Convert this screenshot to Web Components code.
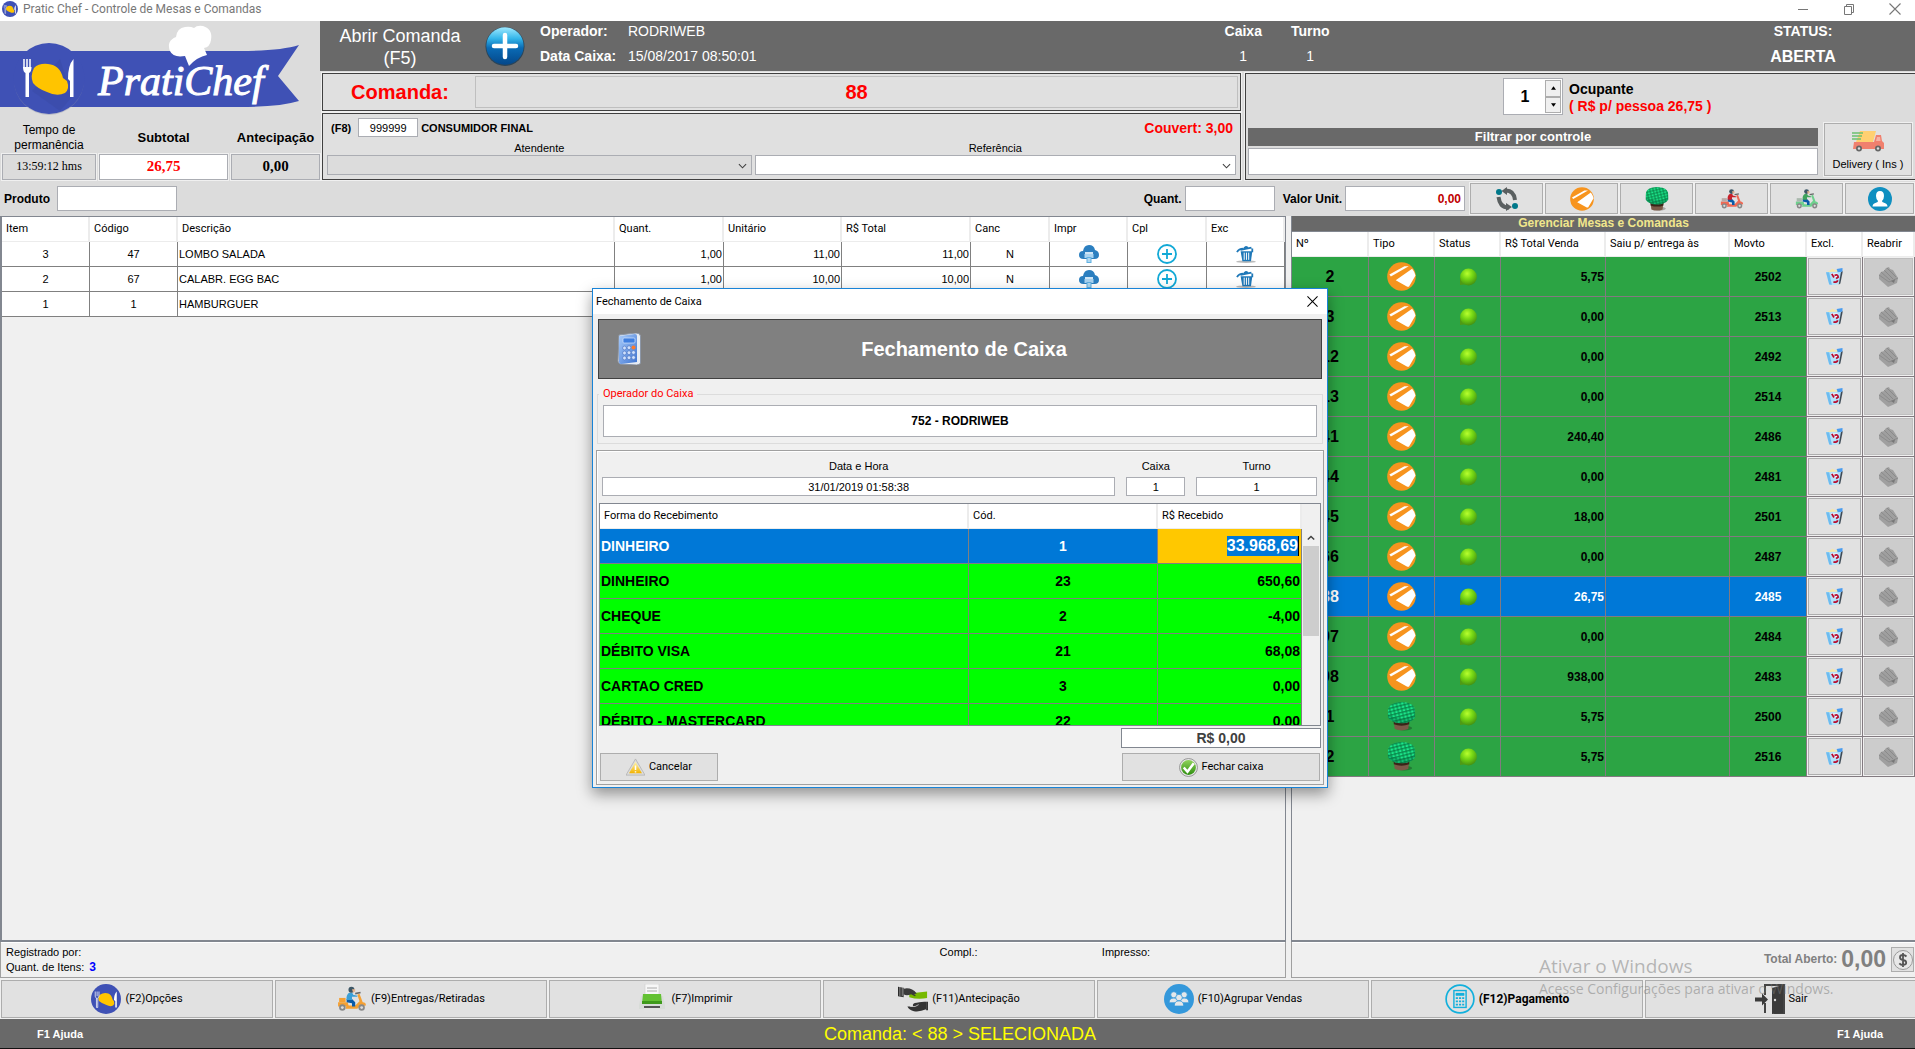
<!DOCTYPE html>
<html lang="pt-BR">
<head>
<meta charset="utf-8">
<title>Pratic Chef - Controle de Mesas e Comandas</title>
<style>
  html, body { margin: 0; height: 100%; overflow: hidden; }
  body { font: 11px/14px "Liberation Sans", Arial, sans-serif; color: #000; background: #f0f0f0; }
</style>
</head>
<body>
<pc-app></pc-app>
<script>
const BASE = `
  *, *::before, *::after { box-sizing: border-box; }
  :host { display: block; box-sizing: border-box; min-width: 0; }
  :host([hidden]) { display: none; }
  input, select, button { font: inherit; color: inherit; margin: 0; border-radius: 0; outline: none; }
  input, select { border: 1px solid #abadb3; background: #fff; padding: 0 4px; min-width: 0; }
`;

class PcElement extends HTMLElement {
  static css = '';
  static html = '';
  constructor() {
    super();
    this.attachShadow({ mode: 'open' });
  }
  attr(name) { return this.getAttribute(name) || ''; }
  render() { return this.constructor.html; }
  connectedCallback() {
    const t = document.createElement('template');
    t.innerHTML = `<style>${BASE}${this.constructor.css}</style>${this.render()}`;
    this.shadowRoot.replaceChildren(t.content.cloneNode(true));
  }
}

/* ---------- icons ---------- */
const SCOOTER = (shirt, bike, box) => `<svg viewBox="0 0 28 24">
  <path d="M1 15h9l1 4H1z" fill="${bike}"/><path d="M9 18h8l4-4-2-6 2-1 3 8c2 0 3 1 3 3l-6 1-2 2H8z" fill="${bike}"/>
  <path d="M17 7l5-1" stroke="#666" stroke-width="1.5"/><rect x="2" y="11" width="6" height="4" fill="${box}"/>
  <circle cx="5" cy="20" r="3" fill="#888"/><circle cx="5" cy="20" r="1.3" fill="#ddd"/>
  <circle cx="23" cy="20" r="3" fill="#888"/><circle cx="23" cy="20" r="1.3" fill="#ddd"/>
  <path d="M9 12h5l3 3v4h-3v-3l-5-1z" fill="#0a5aa8"/>
  <path d="M9 13c-.5-4 1-7 4-7 1 0 2 1 2 2l4 1v1l-5 0 0 3z" fill="${shirt}"/>
  <circle cx="13.500" cy="3.300" r="2.800" fill="#3d5766"/><path d="M14 3h3v2l-2 1z" fill="#e9b48c"/></svg>`;
const TABLE_STOOL = `<svg viewBox="0 0 28 30"><defs>
  <pattern id="w" width="4" height="3.500" patternUnits="userSpaceOnUse" patternTransform="rotate(-14)"><rect width="4" height="3.500" fill="#067a42"/><rect x=".5" y=".4" width="3" height="2.400" fill="#1ce58a"/></pattern></defs>
  <ellipse cx="17" cy="27" rx="8" ry="2.500" fill="#000" opacity=".25"/>
  <path d="M6 20h16l-1 8q-7 3-14 0z" fill="#7b5a48"/><path d="M6 20h16v3q-8 3-16 0z" fill="#3a2418"/>
  <path d="M0 9Q0 3 7 1q7-2 14 0 7 2 7 8v7q-4 6-14 6T0 16z" fill="url(#w)"/>
  <path d="M0 12q4 5 14 5t14-5v4q-4 6-14 6T0 16z" fill="#04603a" opacity=".3"/></svg>`;
const BADGE = `<circle cx="16" cy="16" r="16" fill="#3f51b5"/>
  <path d="M9.500 11.500q4-3 9-1.500 3 1 4 5 .3 2 2 3.500 1 3-1 4.500-3 1.500-7-.5-5-2-8-4.500-1.500-3 1-6.500z" fill="#ffc400"/>
  <path d="M4.500 8v5q0 1.500 1.300 1.800V25h1.400V14.800Q8.500 14.500 8.500 13V8M6.500 8v5" stroke="#fff" fill="none" stroke-width=".8"/>
  <path d="M27.500 8v17h-1.600v-7l-1.400-1q0-6 3-9z" fill="#fff"/>`;

const ICONS = {
  app: `<svg viewBox="0 0 32 32">${BADGE}</svg>`,
  options: `<svg viewBox="0 0 32 32">${BADGE}</svg>`,
  plus: `<svg viewBox="0 0 40 40"><defs><linearGradient id="g" x1="0" y1="0" x2="0" y2="1"><stop offset="0" stop-color="#9fe9ff"/><stop offset=".3" stop-color="#35b6ea"/><stop offset=".55" stop-color="#0a6bb5"/><stop offset="1" stop-color="#04478a"/></linearGradient></defs>
    <circle cx="20" cy="20.500" r="19.500" fill="#2b4457"/><circle cx="20" cy="20" r="18.700" fill="url(#g)"/>
    <path d="M20 9v22M9 20h22" stroke="#fff" stroke-width="4.500" stroke-linecap="round"/></svg>`,
  swap: `<svg viewBox="0 0 24 24"><circle cx="4" cy="5" r="3" fill="#00788a"/><circle cx="20" cy="19" r="3" fill="#00788a"/>
    <path d="M10 3.500Q19 3 20 13" stroke="#5a5f60" stroke-width="4" fill="none"/><path d="M12 0v8L6.500 4z" fill="#5a5f60"/>
    <path d="M14 20.500Q5 21 3.500 10" stroke="#5a5f60" stroke-width="4" fill="none"/><path d="M11 24v-8l6 4z" fill="#5a5f60"/></svg>`,
  ticket: `<svg viewBox="0 0 30 30"><circle cx="15" cy="15" r="14.800" fill="#f7941e"/>
    <path d="M2.500 13L18 4.500l4.500 0L4 15z" fill="#fff"/><path d="M9 19L26 7q2.500 3 3.500 7l-6.500 11q-.5 1-2 .5z" fill="#fff"/></svg>`,
  table: TABLE_STOOL,
  'moto-red': SCOOTER('#c8202a', '#ef6a55', '#b9a9a5'),
  'moto-green': SCOOTER('#3fa35c', '#6ed08d', '#a9b9ad'),
  'moto-orange': SCOOTER('#3b9fd6', '#f5a033', '#f5a033'),
  person: `<svg viewBox="0 0 24 24"><circle cx="12" cy="12" r="12" fill="#0f8fc0"/><path d="M12 4q4 0 4 5 0 3-2 5 0 1 1.500 1.500 4 1 4 4H4.500q0-3 4-4Q10 15 10 14 8 12 8 9q0-5 4-5z" fill="#fff"/></svg>`,
  truck: `<svg viewBox="0 0 32 22"><path d="M8 1h16l-3 11H4z" fill="#ffd071"/><path d="M2 12h20l2-7h5l1 6 2 2v6H1z" fill="#f0806e"/><path d="M25 7h3l.5 4H24z" fill="#f7b3a6"/>
    <path d="M0 3h11M0 6h10M0 9h9" stroke="#6cc070" stroke-width="1.500"/><circle cx="7" cy="18.500" r="3" fill="#666"/><circle cx="7" cy="18.500" r="1.200" fill="#ddd"/><circle cx="26" cy="18.500" r="3" fill="#666"/><circle cx="26" cy="18.500" r="1.200" fill="#ddd"/></svg>`,
  cloud: `<svg viewBox="0 0 20 18"><path d="M4.500 14Q0 14 0 10t4-4q1-6 6-6t6 5q4 1 4 5 0 4-4.500 4z" fill="#2b7fc0"/><rect x="6" y="7" width="8" height="2" fill="#cfe6f7"/><rect x="5.500" y="9" width="9" height="4" fill="#a9d3f0"/><rect x="7.500" y="12" width="5" height="6" fill="#5fb0e2"/><path d="M8.500 14h3M8.500 16h3" stroke="#fff"/></svg>`,
  add: `<svg viewBox="0 0 20 20"><circle cx="10" cy="10" r="9" fill="#fff" stroke="#12a9d6" stroke-width="1.800"/><path d="M10 5v10M5 10h10" stroke="#12a9d6" stroke-width="1.800"/></svg>`,
  trash: `<svg viewBox="0 0 22 20"><ellipse cx="11" cy="18.500" rx="11" ry="1.400" fill="#bbb"/><path d="M5 7h13l-1.500 11H7z" fill="#1f78b8"/><path d="M9 8.500v8M11.500 8.500v8M14 8.500v8" stroke="#fff" stroke-width="1.100"/><path d="M5 5.500l12-2.500M9 4q1-3 4-1M1 8q2-4 7-4M18 4v4" stroke="#1f78b8" stroke-width="2" fill="none"/></svg>`,
  orb: `<svg viewBox="0 0 18 18"><defs><radialGradient id="o" cx=".42" cy=".3" r=".75"><stop offset="0" stop-color="#b8ff2e"/><stop offset=".45" stop-color="#74d614"/><stop offset="1" stop-color="#3f8a10"/></radialGradient></defs><path d="M1 17V10h8v6z" fill="#4f9a15"/><circle cx="9.500" cy="9" r="8.400" fill="url(#o)"/></svg>`,
  recycle: `<svg viewBox="0 0 16 16"><path d="M0 4l15-1.500L13 14.500q-5 2.500-10 1z" fill="#b5e2fa"/><path d="M0 4l3 11.500 2.500.2L3 4z" fill="#6dbcf0"/><path d="M5 5h6l-1 4H6z" fill="#eaf6fd"/><path d="M1.500 3.800L6 .8l3 1.500 3-1 2 2z" fill="#f6e7a8"/><path d="M10 1l5.500-1v3.500l-4.500.5z" fill="#4a9df0"/><path d="M15.800 3l-2.300 11.500-1.500 1L14 4z" fill="#3d4854"/><path d="M5.500 5.500l2 3.500M8 7q3-1.500 3.500 1.500l-2 1.500M11 11.500q-.5 2.500-4 1.500" stroke="#b80f30" stroke-width="1.700" fill="none"/></svg>`,
  reopen: `<svg viewBox="0 0 20 20"><path d="M0 8l2-3 3-1 2-3 3-1 1 2 3 1 5 8-1 5-9 4-9-8z" fill="#9f9f9f"/><path d="M0 8l10 7 9-4M2 5l9 8M5 3l9 9M8 1l9 9" stroke="#858585" stroke-width=".8" fill="none"/><path d="M12 14l4-1.500-1 3.500z" fill="#777"/></svg>`,
  calc: `<svg viewBox="0 0 24 32"><defs><linearGradient id="c" x1="0" x2="1" y2="1"><stop offset="0" stop-color="#a9ccfb"/><stop offset="1" stop-color="#3e74d0"/></linearGradient></defs>
    <path d="M2 2l17-2q4 0 4.500 3v27q-1 2-4 2L3 31q-2-1-2-3z" fill="#e8edf4" stroke="#8c96a6"/><path d="M2 3l16-2q2 0 2 2v26L4 31q-2 0-2-2z" fill="url(#c)"/><rect x="6" y="5" width="12" height="5" rx="1" fill="#3f7fe0" stroke="#d5e6ff" stroke-width=".7"/>
    <g fill="#cfe0fb" stroke="#466fc0" stroke-width=".6"><circle cx="7.500" cy="15" r="1.900"/><circle cx="12" cy="14.700" r="1.900"/><circle cx="7.500" cy="20" r="1.900"/><circle cx="12" cy="19.700" r="1.900"/><circle cx="16.500" cy="19.500" r="1.900"/><circle cx="7.500" cy="25" r="1.900"/><circle cx="12" cy="24.700" r="1.900"/><circle cx="16.500" cy="24.500" r="1.900"/></g><circle cx="16.500" cy="14.500" r="2" fill="#ff7a2a"/></svg>`,
  warn: `<svg viewBox="0 0 20 18"><defs><linearGradient id="y" x1="0" y1="0" x2="0" y2="1"><stop offset="0" stop-color="#fff6b0"/><stop offset="1" stop-color="#f2b200"/></linearGradient></defs><path d="M10 0L20 17H0z" fill="#dcdcdc" stroke="#a9a9a9" stroke-width=".7"/><path d="M10 3l6.800 12H3.200z" fill="url(#y)"/><path d="M10 7v4.500M10 13v1.200" stroke="#fff" stroke-width="1.600"/></svg>`,
  ok: `<svg viewBox="0 0 18 18"><defs><linearGradient id="k" x1="0" y1="0" x2="0" y2="1"><stop offset="0" stop-color="#8fd25a"/><stop offset="1" stop-color="#2f8f10"/></linearGradient></defs><circle cx="9" cy="9" r="8.500" fill="#e6e6e6" stroke="#8a8a8a" stroke-width=".8"/><circle cx="9" cy="9" r="7" fill="url(#k)"/><path d="M4.500 9l3.500 4 6-8" stroke="#fff" stroke-width="2.400" fill="none"/></svg>`,
  printer: `<svg viewBox="0 0 26 30"><rect x="6" y="0" width="14" height="14" fill="#f7f7f7" stroke="#ccc" stroke-width=".6"/><path d="M8 4h10M8 7h10" stroke="#aaa"/><path d="M2 12h22l2 9v4H0v-4z" fill="#d8dcd8"/><path d="M4 10h18l1 10H3z" fill="#63c132"/><path d="M3 17h20v3H3z" fill="#3f9a1c"/><rect x="5" y="22" width="16" height="2" fill="#555"/><rect x="5" y="24" width="16" height="4" fill="#e2e2e2"/></svg>`,
  hands: `<svg viewBox="0 0 32 26"><path d="M0 0l6 1v10l-6-1z" fill="#2b2b2b"/><path d="M2 0v10M4.500 0v10" stroke="#ddd" stroke-width=".6"/><path d="M12 7l19-2v7q-10 2-19-1z" fill="#76b900"/><path d="M6 2q8-2 14 5l-3 1q3 1 1 2l-4-2q-5 2-8 0z" fill="#3a3a3a"/><path d="M10 21h6q-1-4 4-4 6-1 8-1h2v8q-7 3-13 2-5-1-7-5z" fill="#333"/><path d="M30 16l2 0v9h-2z" fill="#333"/><path d="M13 21q6 1 9-2" stroke="#ddd" stroke-width=".8" fill="none"/></svg>`,
  group: `<svg viewBox="0 0 32 32"><circle cx="16" cy="16" r="16" fill="#3498db"/><g fill="#e4e7ea" stroke="#3498db" stroke-width=".8"><circle cx="10.500" cy="11.500" r="3.300"/><circle cx="21.500" cy="11.500" r="3.300"/><path d="M5.500 20q0-5 5-5t5 5zM16.500 20q0-5 5-5t5 5z"/><circle cx="16" cy="14.500" r="3.500"/><path d="M11 23.500q0-5.500 5-5.500t5 5.500z"/></g></svg>`,
  pay: `<svg viewBox="0 0 32 32"><circle cx="16" cy="16" r="14.800" fill="none" stroke="#12b0dc" stroke-width="1.800"/><rect x="9.500" y="7" width="13" height="18" fill="none" stroke="#12b0dc" stroke-width="1.500"/><path d="M11.500 11h9M11.500 15h9M11.500 18.500h9M11.500 22h9" stroke="#12b0dc" stroke-width="2" stroke-dasharray="2.300 1.100"/><path d="M11.500 11h9" stroke="#12b0dc" stroke-width="3"/></svg>`,
  exit: `<svg viewBox="0 0 30 30"><path d="M10 11V1h19v28H19M10 19v10" stroke="#444" stroke-width="2" fill="none"/><path d="M17 4l11-3v28l-11 1z" fill="#3a3a3a"/><circle cx="20" cy="16" r="1.200" fill="#ddd"/><path d="M0 13.500h7v-4l6 6-6 6v-4H0z" fill="#3a3a3a"/></svg>`,
  dollar: `<svg viewBox="0 0 20 20"><circle cx="10" cy="10" r="9.500" fill="#e8e8e8" stroke="#9a9a9a"/><path d="M13.500 6.500Q12 5 10 5 7 5 7 7.300T10 10t3.200 2.600T10 15q-2.300 0-3.700-1.600M10 3v14" stroke="#555" stroke-width="1.800" fill="none"/></svg>`,
  chevron: `<svg viewBox="0 0 10 6"><path d="M1 1l4 4 4-4" fill="none" stroke="#404040" stroke-width="1.200"/></svg>`,
  up: `<svg viewBox="0 0 10 6"><path d="M1 5l4-4 4 4" fill="none" stroke="#404040" stroke-width="1.800"/></svg>`,
  down: `<svg viewBox="0 0 10 6"><path d="M1 1l4 4 4-4" fill="none" stroke="#404040" stroke-width="1.800"/></svg>`,
  'tri-up': `<svg viewBox="0 0 6 4"><path d="M3 0l3 4H0z"/></svg>`,
  'tri-down': `<svg viewBox="0 0 6 4"><path d="M0 0h6L3 4z"/></svg>`,
  close: `<svg viewBox="0 0 12 12"><path d="M.5.5l11 11M11.500.5l-11 11" stroke="currentColor" stroke-width="1.100"/></svg>`,
  min: `<svg viewBox="0 0 12 12"><path d="M1 6.500h10" stroke="currentColor"/></svg>`,
  restore: `<svg viewBox="0 0 12 12"><path d="M1.500 3.500h7v8h-7zM3.500 3.500v-2h7v8h-2" fill="none" stroke="currentColor"/></svg>`
};

class PcIcon extends PcElement {
  static css = `:host { display: inline-block; flex: none; width: var(--w, 24px); height: var(--h, 24px); }
    svg { display: block; width: 100%; height: 100%; }`;
  render() { return (ICONS[this.attr('name')] || '').replace('<svg', '<svg aria-hidden="true" preserveAspectRatio="xMidYMid meet"'); }
}
customElements.define('pc-icon', PcIcon);

/* ---------- generic controls ---------- */
class PcButton extends PcElement {
  static css = `
    :host { display: flex; padding: 1px; background: #f0f0f0; }
    button { flex: 1; min-width: 0; display: flex; align-items: center; justify-content: center; gap: 4px; padding: 0; background: #e1e1e1; border: 1px solid #adadad; white-space: nowrap; }
    button:disabled { background: #ccc; border-color: #bfbfbf; color: inherit; }
    :host([stacked]) button { flex-direction: column; gap: 5px; padding-top: 2px; }`;
  render() {
    return `<button type="button" ${this.hasAttribute('off') ? 'disabled' : ''} ${this.attr('label') ? `aria-label="${this.attr('label')}"` : ''}><slot name="icon"></slot><slot></slot></button>`;
  }
}
customElements.define('pc-button', PcButton);

class PcField extends PcElement {
  static css = `
    :host { display: flex; align-items: center; gap: 3px; font-weight: bold; font-size: 12px; }
    label { white-space: nowrap; }
    input { width: 100%; height: 25px; font-weight: normal; padding: 0 3px; }
    .box { width: var(--input-width, 120px); display: flex; }
    :host([money]) input { text-align: right; color: #c00000; font-weight: bold; }`;
  render() {
    return `<label for="f">${this.attr('label')}</label><span class="box"><input id="f" type="text" value="${this.attr('value')}"></span>`;
  }
}
customElements.define('pc-field', PcField);

class PcSelect extends PcElement {
  static css = `
    :host { display: grid; grid-template-rows: 14px 20px; text-align: center; }
    .box { position: relative; display: flex; }
    select { appearance: none; width: 100%; height: 20px; }
    :host([off]) select { background: #dcdcdc; }
    pc-icon { position: absolute; right: 5px; top: 8px; --w: 9px; --h: 6px; pointer-events: none; }`;
  render() {
    return `<label for="s">${this.attr('label')}</label><div class="box"><select id="s"></select><pc-icon name="chevron"></pc-icon></div>`;
  }
}
customElements.define('pc-select', PcSelect);

class PcPanel extends PcElement {
  static css = `:host { border: 1px solid #404040; outline: 1px solid #f0f0f0; background: #e0e0e0; }`;
  static html = `<slot></slot>`;
}
customElements.define('pc-panel', PcPanel);

/* ---------- window title ---------- */
class PcTitlebar extends PcElement {
  static css = `
    :host { display: flex; align-items: center; height: 21px; padding: 0 14px 3px 2px; gap: 5px; background: #fff; color: #777; font: 12px/16px Roboto, "Segoe UI", sans-serif; }
    .grow { flex: 1; }
    pc-icon { --w: 16px; --h: 16px; }
    nav { display: flex; gap: 34px; }
    nav button { display: flex; padding: 0; border: 0; background: none; }
    nav pc-icon { --w: 12px; --h: 12px; }`;
  static html = `<pc-icon name="app"></pc-icon><span class="grow">Pratic Chef - Controle de Mesas e Comandas</span>
    <nav><button aria-label="Minimizar"><pc-icon name="min"></pc-icon></button><button aria-label="Restaurar"><pc-icon name="restore"></pc-icon></button><button aria-label="Fechar"><pc-icon name="close"></pc-icon></button></nav>`;
}
customElements.define('pc-titlebar', PcTitlebar);

/* ---------- brand and totals ---------- */
class PcBrand extends PcElement {
  static css = `
    :host { display: grid; grid-template-rows: 98px auto; background: #dcdcdc; }
    .logo { display: block; width: 320px; height: 98px; }
    .stats { display: grid; grid-template-columns: 94px 129px 89px; gap: 0 3px; padding-left: 2px; }
    .stat { display: grid; grid-template-rows: 34px 27px; align-items: center; text-align: center; font-weight: bold; font-size: 13px; }
    .stat label { padding-top: 4px; }
    .stat.time { font: 12px/15px "Liberation Sans", sans-serif; }
    input { width: 100%; height: 26px; text-align: center; background: #dcdcdc; outline: 1px solid #f0f0f0; font: bold 15px/18px "Liberation Serif", serif; }
    .time input { font: 12px/15px "Liberation Serif", serif; }
    .sub input { color: #f00; background: #fff; }`;
  static html = `
    <svg class="logo" viewBox="0 0 320 98" role="img" aria-label="PratiChef">
      <path d="M0 30h240q40 0 59-6l-21 31 21 25q-20 6-59 6H0z" fill="#3f51b5"/>
      <circle cx="49" cy="59" r="35" fill="#8a8fa8" opacity=".4"/><circle cx="49" cy="57.500" r="35.500" fill="#3f51b5"/>
      <path d="M60 38L72 76 60 90 32 70z" fill="#37479f" opacity=".35"/>
      <path d="M34 47q5-5 14-4 12 1 15 14l4 3q3 8-2 12-8 4-18-1-9-3-14-9-3-7 1-15z" fill="#ffc400"/>
      <path d="M24 38v9M27 38v9M30 38v9" stroke="#fff" stroke-width="1.500"/><path d="M23 46h8.500q0 5-2.500 6v24h-3.500V52q-2.500-1-2.500-6z" fill="#fff"/>
      <path d="M73.500 38v38H70V60l-2-2q0-14 5.500-20z" fill="#fff"/>
      <path d="M189 45l-4-10q-12 2-15-5-4-10 6-14 1-9 9-10 5-1 9 1 3-3 9-2 10 3 8 14-1 7-7 8l3 7q-10 2-18 11z" fill="#fff"/>
      <text x="98" y="74" font-family="Liberation Serif, serif" font-style="italic" font-size="42" fill="#fff" stroke="#fff" stroke-width="1">PratiChef</text>
    </svg>
    <div class="stats">
      <div class="stat time"><label for="t">Tempo de<br>permanência</label><input id="t" value="13:59:12 hms" readonly></div>
      <div class="stat sub"><label for="s">Subtotal</label><input id="s" value="26,75" readonly></div>
      <div class="stat"><label for="a">Antecipação</label><input id="a" value="0,00" readonly></div>
    </div>`;
}
customElements.define('pc-brand', PcBrand);

/* ---------- dark session bar ---------- */
class PcSession extends PcElement {
  static css = `
    :host { display: flex; height: 50px; padding-right: 78px; background: #696969; color: #fff; font-size: 14px; line-height: 25px; }
    .open { width: 160px; font-size: 18px; line-height: 22px; text-align: center; padding: 4px 0; border: 0; background: none; }
    .add { display: flex; align-items: center; padding: 0 0 0 5px; border: 0; background: none; }
    .add pc-icon { --w: 40px; --h: 40px; }
    dl { display: grid; grid-template-columns: 88px auto; align-content: start; margin: -2px 0 0 15px; }
    dt { font-weight: bold; } dd { margin: 0; }
    .pair { display: grid; justify-items: center; margin-top: -2px; width: 67px; height: 50px; }
    .status { width: 68px; }
    .gap { flex: 453; } .gap.end { flex: 425; }
    .status b + b { font-size: 16px; }`;
  static html = `
    <button class="open">Abrir Comanda<br>(F5)</button>
    <button class="add" aria-label="Abrir comanda"><pc-icon name="plus"></pc-icon></button>
    <dl><dt>Operador:</dt><dd>RODRIWEB</dd><dt>Data Caixa:</dt><dd>15/08/2017 08:50:01</dd></dl>
    <div class="gap"></div>
    <div class="pair"><b>Caixa</b><span>1</span></div>
    <div class="pair"><b>Turno</b><span>1</span></div>
    <div class="gap end"></div>
    <div class="pair status"><b>STATUS:</b><b>ABERTA</b></div>`;
}
customElements.define('pc-session', PcSession);

/* ---------- order panel ---------- */
class PcOrder extends PcElement {
  static css = `
    :host { display: grid; grid-template-rows: 38px 67px; gap: 2px; }
    .order { display: grid; grid-template-columns: 150px 1fr; padding: 2px; align-items: center; color: #f00; font-weight: bold; font-size: 20px; text-align: center; }
    .order input { width: 100%; height: 32px; text-align: center; background: #e0e0e0; border-color: #bfbfbf; }
    .client { display: grid; grid-template-rows: 27px 34px; padding: 0 4px; }
    .row { display: flex; align-items: center; gap: 3px; font-weight: bold; }
    .row label { padding: 0 4px; }
    .row input { width: 60px; height: 19px; font-weight: normal; text-align: center; }
    .couvert { margin-left: auto; color: #f00; font-size: 14px; padding-right: 3px; }
    .selects { display: grid; grid-template-columns: 425fr 482fr; gap: 3px; }`;
  static html = `
    <pc-panel><div class="order"><label for="c">Comanda:</label><input id="c" value="88" readonly></div></pc-panel>
    <pc-panel><div class="client">
      <div class="row"><label for="k">(F8)</label><input id="k" value="999999"><span>CONSUMIDOR FINAL</span><span class="couvert">Couvert: 3,00</span></div>
      <div class="selects"><pc-select off label="Atendente"></pc-select><pc-select label="Referência"></pc-select></div>
    </div></pc-panel>`;
}
customElements.define('pc-order', PcOrder);

/* ---------- occupants and filter ---------- */
class PcGuests extends PcElement {
  static css = `
    :host { display: grid; }
    pc-panel { background: #dcdcdc; border-right: 0; }
    .guests { display: grid; grid-template-columns: 1fr 90px; gap: 0 5px; padding: 4px 2px 2px 2px; }
    .who { grid-column: 1 / -1; display: flex; gap: 6px; height: 50px; padding-left: 255px; font-weight: bold; font-size: 14px; line-height: 17px; }
    .spin { display: flex; width: 60px; height: 37px; background: #fff; border: 1px solid #abadb3; padding: 1px; }
    .spin input { flex: 1; width: 0; border: 0; text-align: center; font-size: 16px; }
    .spin div { display: grid; width: 16px; }
    .spin button { display: grid; place-items: center; padding: 0; background: #f0f0f0; border: 1px solid #adadad; }
    .spin pc-icon { --w: 5px; --h: 4px; }
    .who label { display: block; padding-top: 3px; } .who em { font-style: normal; color: #f00; }
    .filter label { display: block; height: 18px; line-height: 18px; text-align: center; background: #696969; color: #fff; font-weight: bold; font-size: 13px; }
    .filter input { display: block; width: 100%; height: 27px; margin-top: 2px; }
    pc-button { height: 55px; margin-top: -6px; }
    pc-icon[name="truck"] { --w: 32px; --h: 22px; }`;
  static html = `<pc-panel><div class="guests">
      <div class="who"><span class="spin"><input id="o" value="1"><div><button aria-label="Mais"><pc-icon name="tri-up"></pc-icon></button><button aria-label="Menos"><pc-icon name="tri-down"></pc-icon></button></div></span>
        <div><label for="o">Ocupante</label><em>( R$ p/ pessoa 26,75 )</em></div></div>
      <div class="filter"><label for="f">Filtrar por controle</label><input id="f"></div>
      <pc-button stacked><pc-icon slot="icon" name="truck"></pc-icon>Delivery ( Ins )</pc-button>
    </div></pc-panel>`;
}
customElements.define('pc-guests', PcGuests);

/* ---------- product toolbar ---------- */
class PcToolbar extends PcElement {
  static css = `
    :host { display: flex; align-items: center; height: 35px; padding-left: 4px; background: #dcdcdc; }
    .product { --input-width: 120px; gap: 7px; } .qty { --input-width: 90px; } .unit { --input-width: 120px; margin: 0 4px 0 8px; }
    .grow { flex: 1; }
    pc-button { width: 75px; height: 33px; }
    pc-button:last-child { width: 71px; }
    pc-icon { --w: 24px; --h: 24px; }`;
  static html = `
    <pc-field class="product" label="Produto"></pc-field><span class="grow"></span>
    <pc-field class="qty" label="Quant."></pc-field><pc-field class="unit" money label="Valor Unit." value="0,00"></pc-field>
    ${['swap:Transferir', 'ticket:Comandas', 'table:Mesas', 'moto-red:Entregas', 'moto-green:Retiradas', 'person:Clientes'].map(s => {
      const [i, l] = s.split(':'); return `<pc-button label="${l}"><pc-icon slot="icon" name="${i}"></pc-icon></pc-button>`; }).join('')}`;
}
customElements.define('pc-toolbar', PcToolbar);

/* ---------- grids ---------- */
const GRID = `
  table { width: 100%; table-layout: fixed; border-collapse: separate; border-spacing: 0; }
  th { height: 25px; padding: 0 0 0 4px; text-align: left; font-weight: normal; font-family: Roboto, Tahoma, sans-serif; background: #fff; border-right: 2px solid #ececec; border-bottom: 1px solid #ececec; white-space: nowrap; overflow: hidden; }
  td { padding: 0 1px; border-right: 1px solid #808080; border-bottom: 1px solid #808080; white-space: nowrap; overflow: hidden; }
  .c { text-align: center; } .r { text-align: right; }
  td pc-icon { vertical-align: middle; }
`;
const head = cols => `<colgroup>${cols.map(c => `<col${c[1] ? ` style="width:${c[1]}px"` : ''}>`).join('')}</colgroup><thead><tr>${cols.map(c => `<th scope="col">${c[0]}</th>`).join('')}</tr></thead>`;

class PcItems extends PcElement {
  static css = GRID + `
    :host { display: flex; flex-direction: column; border: 2px solid #828790; border-top-width: 1px; border-right-width: 1px; margin-right: 3px; }
    td { height: 25px; background: #fff; }
    td button { display: inline-flex; padding: 0; border: 0; background: none; vertical-align: middle; }
    pc-icon { --w: 20px; --h: 18px; }
    pc-icon[name="add"] { --h: 20px; }`;
  render() {
    const rows = [[3, 47, 'LOMBO SALADA', '11,00'], [2, 67, 'CALABR. EGG BAC', '10,00'], [1, 1, 'HAMBURGUER', '5,75']];
    const b = (i, l) => `<td class="c"><button aria-label="${l}"><pc-icon name="${i}"></pc-icon></button></td>`;
    return `<table>${head([['Item', 88], ['Código', 88], ['Descrição'], ['Quant.', 109], ['Unitário', 118], ['R$ Total', 129], ['Canc', 79], ['Impr', 78], ['Cpl', 79], ['Exc', 78]])}
      <tbody>${rows.map(r => `<tr><td class="c">${r[0]}</td><td class="c">${r[1]}</td><td>${r[2]}</td><td class="r">1,00</td><td class="r">${r[3]}</td><td class="r">${r[3]}</td><td class="c">N</td>${b('cloud', 'Imprimir')}${b('add', 'Complemento')}${b('trash', 'Excluir')}</tr>`).join('')}</tbody></table>`;
  }
}
customElements.define('pc-items', PcItems);

class PcBoard extends PcElement {
  static css = GRID + `
    :host { display: flex; flex-direction: column; border-left: 1px solid #828790; border-bottom: 2px solid #828790; }
    h2 { margin: 0; height: 16px; font-size: 12px; line-height: 15px; text-align: center; color: #f0e68c; background: #696969; border-bottom: 1px solid #828790; }
    td { height: 40px; background: #2ca444; font-size: 12px; font-weight: bold; border-color: #827a80; }
    td.n { font-size: 16px; }
    tr.on td { background: #0078d7; color: #fff; }
    tr td.b { padding: 0; background: #f0f0f0; }
    pc-button { height: 39px; }
    pc-icon { --w: 29px; --h: 29px; }
    pc-icon[name="orb"] { --w: 18px; --h: 18px; }
    pc-icon[name="recycle"] { --w: 17px; --h: 17px; } pc-icon[name="reopen"] { --w: 20px; --h: 20px; }`;
  render() {
    const t = 'ticket', m = 'table';
    const rows = [[2, t, '5,75', 2502], [3, t, '0,00', 2513], [12, t, '0,00', 2492], [13, t, '0,00', 2514], [41, t, '240,40', 2486], [44, t, '0,00', 2481], [45, t, '18,00', 2501], [66, t, '0,00', 2487], [88, t, '26,75', 2485], [97, t, '0,00', 2484], [98, t, '938,00', 2483], [1, m, '5,75', 2500], [2, m, '5,75', 2516]];
    return `<h2>Gerenciar Mesas e Comandas</h2><table>${head([['Nº', 77], ['Tipo', 66], ['Status', 66], ['R$ Total Venda', 105], ['Saiu p/ entrega às'], ['Movto', 77], ['Excl.', 56], ['Reabrir', 52]])}
      <tbody>${rows.map(r => `<tr${r[0] === 88 ? ' class="on"' : ''}><td class="c n">${r[0]}</td><td class="c"><pc-icon name="${r[1]}"></pc-icon></td><td class="c"><pc-icon name="orb"></pc-icon></td><td class="r">${r[2]}</td><td></td><td class="c">${r[3]}</td><td class="b"><pc-button label="Excluir"><pc-icon slot="icon" name="recycle"></pc-icon></pc-button></td><td class="b"><pc-button off label="Reabrir"><pc-icon slot="icon" name="reopen"></pc-icon></pc-button></td></tr>`).join('')}</tbody></table>`;
  }
}
customElements.define('pc-board', PcBoard);

/* ---------- lower strip ---------- */
class PcSummary extends PcElement {
  static css = `
    :host { display: grid; grid-template-columns: 1289fr 626fr; height: 36px; line-height: 15px; }
    .left, .right { border: 1px solid #a0a0a0; border-top: 0; box-shadow: inset 0 1px #fff; }
    .left { display: grid; grid-template-columns: 938fr 163fr 184fr; grid-auto-rows: 15px; margin-right: 3px; padding: 3px 0 0 5px; }
    .left b { font-size: 12px; color: #00f; padding-left: 2px; }
    .right { display: flex; align-items: center; justify-content: flex-end; gap: 4px; border-right: 0; margin-left: 2px; color: #808080; font-weight: bold; font-size: 12px; }
    .big { font-size: 23px; }
    pc-button { width: 25px; height: 27px; } pc-icon { --w: 20px; --h: 20px; }`;
  static html = `
    <div class="left"><span>Registrado por:</span><span>Compl.:</span><span>Impresso:</span><span>Quant. de Itens: <b>3</b></span></div>
    <div class="right"><span>Total Aberto:</span><span class="big">0,00</span><pc-button label="Total"><pc-icon slot="icon" name="dollar"></pc-icon></pc-button></div>`;
}
customElements.define('pc-summary', PcSummary);

class PcActions extends PcElement {
  static css = `
    :host { display: grid; grid-template-columns: repeat(7, 1fr); height: 41px; padding-top: 1px; margin-right: -3px; font-family: Roboto, Tahoma, sans-serif; }
    pc-icon { --w: 30px; --h: 30px; }
    .strong { font-weight: bold; font-size: 12px; }`;
  static html = [['options', '(F2)Opções'], ['moto-orange', '(F9)Entregas/Retiradas'], ['printer', '(F7)Imprimir'], ['hands', '(F11)Antecipação'], ['group', '(F10)Agrupar Vendas'], ['pay', '(F12)Pagamento'], ['exit', 'Sair']]
    .map(([i, l]) => `<pc-button${i === 'pay' ? ' class="strong"' : ''}><pc-icon slot="icon" name="${i}"></pc-icon>${l}</pc-button>`).join('');
}
customElements.define('pc-actions', PcActions);

class PcStatus extends PcElement {
  static css = `
    :host { display: grid; grid-template-columns: 1fr auto 1fr; align-items: center; height: 30px; padding: 0 32px 0 37px; background: #696969; border-bottom: 1px solid #111; color: #fff; font-weight: bold; }
    .now { color: #ff0; font-weight: normal; font-size: 18px; line-height: 22px; }
    span:last-child { text-align: right; }`;
  static html = `<span>F1 Ajuda</span><span class="now">Comanda: &lt; 88 &gt; SELECIONADA</span><span>F1 Ajuda</span>`;
}
customElements.define('pc-status', PcStatus);

/* ---------- closing dialog ---------- */
class PcDialog extends PcElement {
  static css = GRID + `
    :host { width: 736px; background: #f0f0f0; border: 1px solid #1883d7; box-shadow: 0 6px 14px rgba(0,0,0,.4); }
    .cap { display: flex; align-items: center; justify-content: space-between; height: 25px; padding: 0 9px 0 3px; background: #fff; font: 11px/14px Roboto, Tahoma, sans-serif; }
    .cap button { display: flex; padding: 0; border: 0; background: none; }
    .cap pc-icon { --w: 11px; --h: 11px; }
    .hero { display: grid; grid-template-columns: 25px 1fr; align-items: center; height: 60px; margin: 5px 5px 8px; padding: 0 35px 0 18px; background: #808080; border: 1px solid #404040; color: #fff; text-align: center; }
    .hero h1 { margin: 0; font-size: 20px; line-height: 24px; }
    .hero pc-icon { --w: 24px; --h: 32px; }
    fieldset { margin: 0 4px; padding: 4px 5px 6px; border: 1px solid #dcdcdc; }
    legend { margin-left: -4px; padding: 0 4px; color: #f00; font-family: Roboto, Tahoma, sans-serif; }
    fieldset input { display: block; width: 100%; height: 32px; text-align: center; font-size: 12px; font-weight: bold; }
    .body { margin: 6px 3px 2px; padding: 7px 2px 2px; border: 1px solid #a0a0a0; box-shadow: inset 1px 1px #fff; }
    .info { display: grid; grid-template-columns: 514fr 59fr 121fr; gap: 11px; padding: 0 4px 0 3px; text-align: center; line-height: 16px; }
    .info input { display: block; width: 100%; height: 19px; margin-top: 3px; text-align: center; }
    .grid { display: grid; grid-template-columns: 1fr 18px; height: 223px; margin-top: 7px; border: 1px solid #828790; overflow: hidden; }
    .grid td { height: 35px; background: #0f0; font-weight: bold; font-size: 14px; border-color: #808080; }
    .grid tr.on td { background: #0078d7; color: #fff; }
    .grid tr.on td.v { background: #ffc800; padding-right: 2px; }
    .v input { field-sizing: content; padding: 0; border: 0; border-right: 1px solid #000; background: #0078d7; font-size: 16px; line-height: 20px; height: 20px; }
    .bar { display: flex; flex-direction: column; align-items: center; gap: 5px; padding: 31px 1px 5px; }
    .bar i { width: 16px; height: 90px; background: #cdcdcd; }
    .bar pc-icon { --w: 8px; --h: 6px; } .bar pc-icon:last-child { margin-top: auto; }
    .total { display: block; width: 200px; height: 20px; margin: 2px 0 4px auto; text-align: center; font-size: 14px; font-weight: bold; color: #404040; border-color: #828790; }
    footer { display: flex; justify-content: space-between; font-family: Roboto, Tahoma, sans-serif; }
    footer pc-button { width: 120px; height: 30px; } footer pc-button:last-child { width: 200px; }
    footer pc-icon { --w: 19px; --h: 19px; }`;
  render() {
    const rows = [['DINHEIRO', 1, '<input aria-label="R$ Recebido" value="33.968,69">'], ['DINHEIRO', 23, '650,60'], ['CHEQUE', 2, '-4,00'], ['DÉBITO VISA', 21, '68,08'], ['CARTAO CRED', 3, '0,00'], ['DÉBITO - MASTERCARD', 22, '0,00']];
    return `
      <div class="cap"><span>Fechamento de Caixa</span><button aria-label="Fechar"><pc-icon name="close"></pc-icon></button></div>
      <div class="hero"><pc-icon name="calc"></pc-icon><h1>Fechamento de Caixa</h1></div>
      <fieldset><legend>Operador do Caixa</legend><input aria-label="Operador do Caixa" value="752 - RODRIWEB"></fieldset>
      <div class="body">
        <div class="info"><div><label for="d">Data e Hora</label><input id="d" value="31/01/2019 01:58:38"></div><div><label for="c">Caixa</label><input id="c" value="1"></div><div><label for="t">Turno</label><input id="t" value="1"></div></div>
        <div class="grid"><div><table>${head([['Forma do Recebimento'], ['Cód.', 189], ['R$ Recebido', 144]])}<tbody>
          ${rows.map((r, i) => `<tr${i ? '' : ' class="on"'}><td>${r[0]}</td><td class="c">${r[1]}</td><td class="r v">${r[2]}</td></tr>`).join('')}</tbody></table></div>
          <div class="bar"><pc-icon name="up"></pc-icon><i></i><pc-icon name="down"></pc-icon></div></div>
        <input class="total" aria-label="Total" value="R$ 0,00" readonly>
        <footer><pc-button><pc-icon slot="icon" name="warn"></pc-icon>Cancelar</pc-button><pc-button><pc-icon slot="icon" name="ok"></pc-icon>Fechar caixa</pc-button></footer>
      </div>`;
  }
  connectedCallback() { super.connectedCallback(); this.setAttribute('role', 'dialog'); }
}
customElements.define('pc-dialog', PcDialog);

class PcWatermark extends PcElement {
  static css = `:host { color: rgba(120,120,120,.5); font-family: "Open Sans", "Segoe UI", sans-serif; pointer-events: none; font-size: 14px; line-height: 20px; white-space: nowrap; }
    strong { display: block; font-weight: normal; font-size: 19px; line-height: 26px; }`;
  static html = `<strong>Ativar o Windows</strong>Acesse Configurações para ativar o Windows.`;
}
customElements.define('pc-watermark', PcWatermark);

/* ---------- page ---------- */
class PcApp extends PcElement {
  static css = `
    :host { display: flex; flex-direction: column; position: relative; height: 100vh; min-height: 900px; overflow: hidden; }
    .top { display: grid; grid-template-columns: 320px 1fr; background: #dcdcdc; }
    .forms { display: grid; grid-template-columns: 919fr 670fr; gap: 4px; padding: 2px 0 1px 2px; }
    .main { flex: 1; min-height: 0; display: grid; grid-template-columns: 1289fr 626fr; }
    pc-board { margin-left: 2px; }
    pc-dialog { position: absolute; left: 592px; top: 288px; }
    pc-watermark { position: absolute; left: 1539px; bottom: 50px; }`;
  static html = `
    <pc-titlebar></pc-titlebar>
    <div class="top"><pc-brand></pc-brand><div><pc-session></pc-session><div class="forms"><pc-order></pc-order><pc-guests></pc-guests></div></div></div>
    <pc-toolbar></pc-toolbar>
    <div class="main"><pc-items></pc-items><pc-board></pc-board></div>
    <pc-summary></pc-summary>
    <pc-actions></pc-actions>
    <pc-status></pc-status>
    <pc-dialog aria-label="Fechamento de Caixa"></pc-dialog>
    <pc-watermark></pc-watermark>`;
}
customElements.define('pc-app', PcApp);
</script>
</body>
</html>
